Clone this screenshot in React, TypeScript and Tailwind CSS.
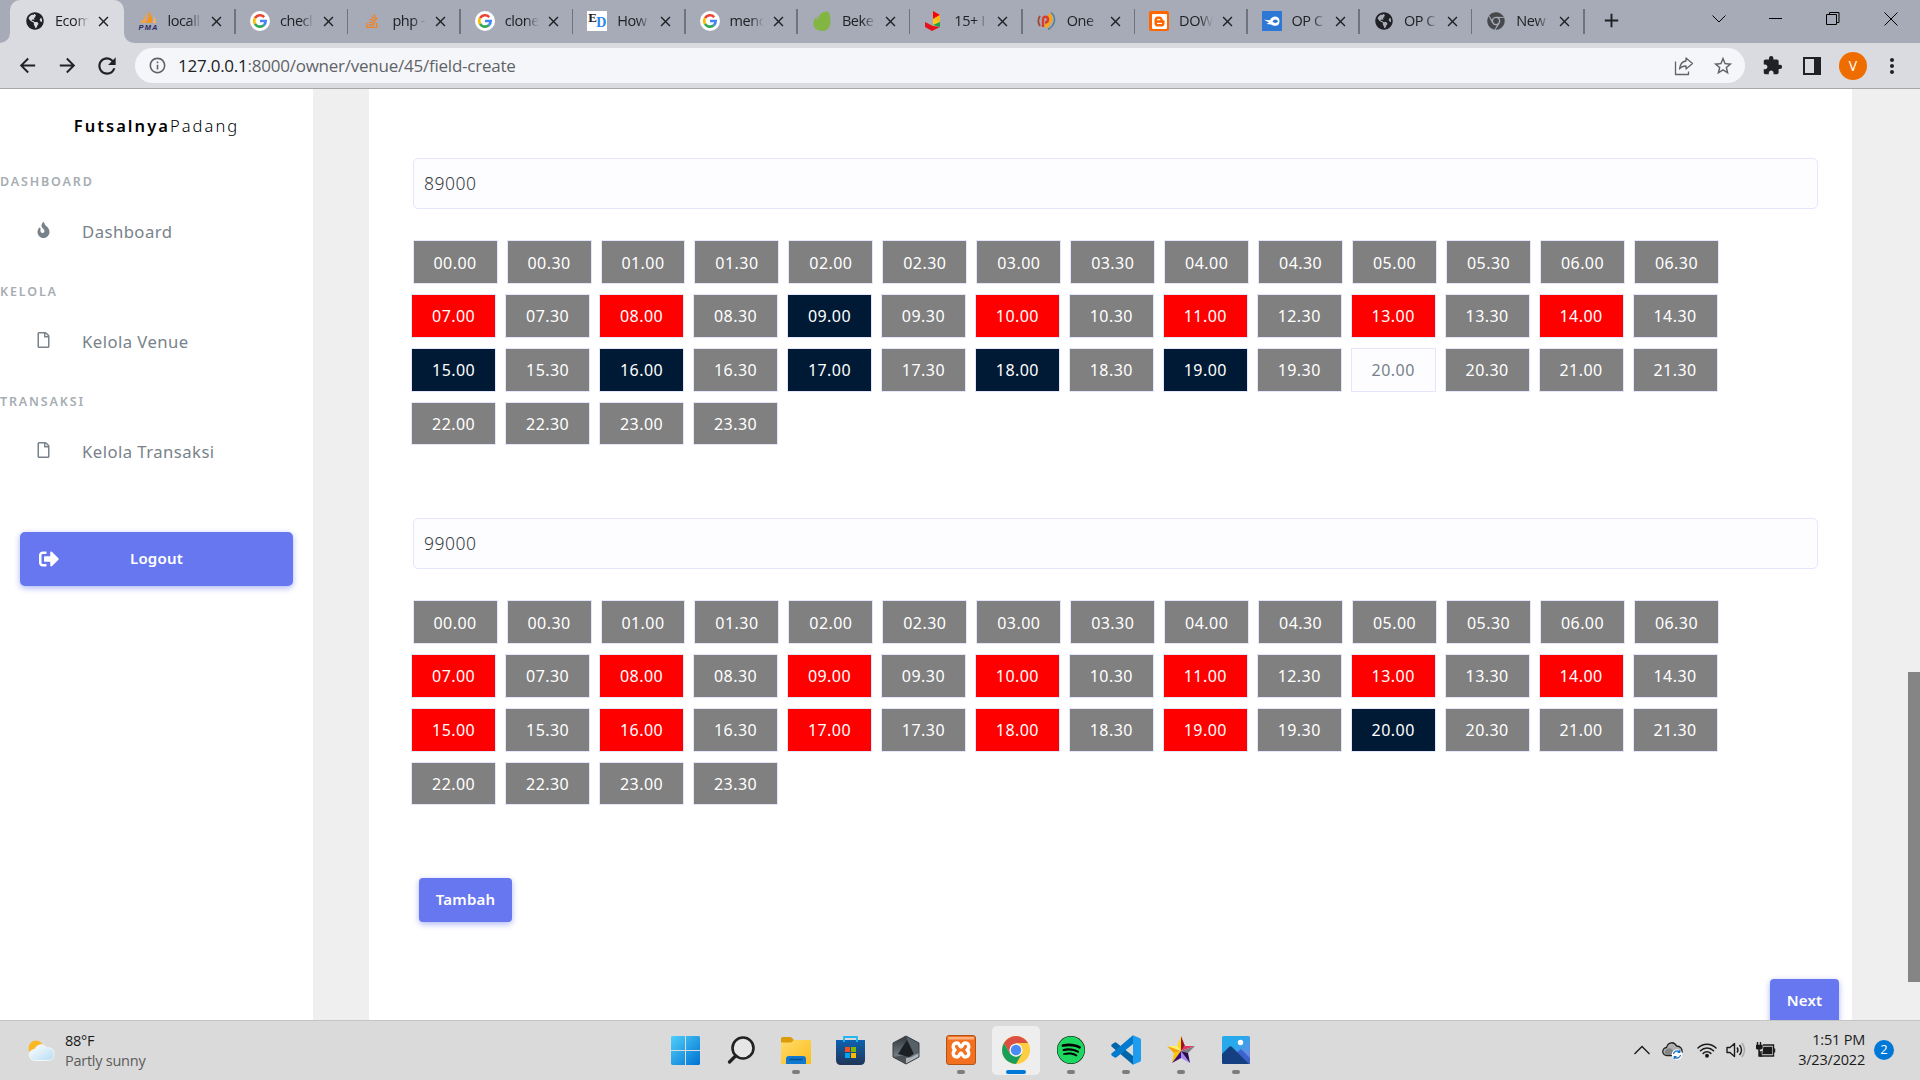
import React from "react";
import { FaGlobeAmericas, FaFire, FaRegFile, FaSignOutAlt, FaStackOverflow, FaSpotify, FaChrome } from "react-icons/fa";
import { SiBlogger } from "react-icons/si";
import { MdClose, MdExtension, MdMoreVert, MdArrowBack, MdArrowForward, MdRefresh, MdAdd, MdInfoOutline, MdStarOutline } from "react-icons/md";

const UI = "font-['Open_Sans','Noto_Sans',sans-serif]";
const BODY = "font-['Noto_Sans',sans-serif]";

function GoogleIcon() {
  return (
    <svg viewBox="0 0 20 20" className="h-5 w-5">
      <circle cx="10" cy="10" r="10" fill="#fff" />
      <g fill="none" strokeWidth="2.6">
        <path d="M14.2 6.1A5.8 5.8 0 0 0 5 7.1" stroke="#ea4335" />
        <path d="M5 7.1a5.8 5.8 0 0 0 0 5.8" stroke="#fbbc05" />
        <path d="M5 12.9a5.8 5.8 0 0 0 8.8 1.3" stroke="#34a853" />
        <path d="M13.8 14.2A5.6 5.6 0 0 0 15.7 10H10" stroke="#4285f4" />
      </g>
    </svg>
  );
}

function PmaIcon() {
  return (
    <svg viewBox="0 0 20 20" className="h-5 w-5">
      <path d="M8 1c1 4 1 8-1 11H2C5 9 8 6 8 1z" fill="#f9a13a" />
      <path d="M10 0c4 4 5 8 4 12H8c3-4 3-8 2-12z" fill="#f7941e" />
      <path d="M15 4c2 3 3 5 3 8h-3c1-3 1-5 0-8z" fill="#fbb45c" />
      <text x="0.5" y="18.8" fontSize="7.500" fontWeight="700" fontStyle="italic" fontFamily="Liberation Sans" fill="#2a2c66" textLength="19">PMA</text>
    </svg>
  );
}

function EdIcon() {
  return (
    <span className="relative block h-5 w-5 bg-white font-['Liberation_Serif',serif] font-bold">
      <span className="absolute left-[1px] top-[-1px] text-[13px] leading-[15px] text-[#222]">E</span>
      <span className="absolute left-[9px] top-[4px] text-[14px] leading-[15px] text-[#2b86ee]">D</span>
    </span>
  );
}

function LeafIcon() {
  return (
    <svg viewBox="0 0 20 20" className="h-5 w-5">
      <path d="M15.500.5C12 0 6 3 5 10c-.6-1-.5-3-.2-4.500C2 8 .5 12 2 15.500 4 19 8 20 11 20c5-.5 8-5 7.500-11C18.200 5 17.500 1 15.500.5z" fill="#82b541" />
    </svg>
  );
}

function BlocksIcon() {
  return (
    <svg viewBox="0 0 20 20" className="h-5 w-5">
      <path d="M9 0l7 4-7 4z" fill="#f00" />
      <path d="M16 4v7L9 8z" fill="#fdb813" />
      <path d="M9 8l7 3-7 4z" fill="#fcc914" />
      <path d="M16 11v5l-7-2z" fill="#17a34a" />
      <path d="M1 11l8 4 7 1-8 4-7-4z" fill="#e5121d" />
    </svg>
  );
}

function SwirlIcon() {
  return (
    <svg viewBox="0 0 20 20" className="h-5 w-5" fill="none">
      <path d="M3 5a9 9 0 0 0 0 10" stroke="#a0482f" strokeWidth="1.800" />
      <path d="M11.500 3.500c4 3 1.500 9-3.500 12.500" stroke="#f7a51c" strokeWidth="3.800" />
      <path d="M6 16V8.500c0-4 5-3.500 5 0 0 2-1.500 3-3 3" stroke="#dd3b2b" strokeWidth="2.400" />
      <path d="M14 1.500c6 5 4 13-3 17" stroke="#53808f" strokeWidth="1.500" />
    </svg>
  );
}

function OneShotIcon() {
  return (
    <svg viewBox="0 0 20 20" className="h-5 w-5">
      <rect width="20" height="20" fill="#2c78d4" />
      <path d="M2 8.800l6 .4c1-2.500 3-3.700 5.500-3.700a4.700 4.700 0 0 1 0 9.300c-2 0-3-.6-4.500-1.300l-4.500-.5 2.500-1.500z" fill="#fff" />
      <ellipse cx="13.300" cy="10.200" rx="2.400" ry="1.700" fill="#2c78d4" />
    </svg>
  );
}

const globe = <FaGlobeAmericas className="h-[18px] w-[18px] text-[#202124]" />;
const tabs: { t: string; icon: React.ReactNode }[] = [
  { t: "Ecom", icon: globe },
  { t: "locall", icon: <PmaIcon /> },
  { t: "checl", icon: <GoogleIcon /> },
  { t: "php -", icon: <FaStackOverflow className="h-4 w-4 text-[#f48024]" /> },
  { t: "clone", icon: <GoogleIcon /> },
  { t: "How", icon: <EdIcon /> },
  { t: "menc", icon: <GoogleIcon /> },
  { t: "Beke", icon: <LeafIcon /> },
  { t: "15+ I", icon: <BlocksIcon /> },
  { t: "One", icon: <SwirlIcon /> },
  { t: "DOW", icon: <span className="flex h-5 w-5 items-center justify-center rounded-[2px] bg-[#ff6600]"><SiBlogger className="h-[15px] w-[15px] text-white" /></span> },
  { t: "OP C", icon: <OneShotIcon /> },
  { t: "OP C", icon: globe },
  { t: "New", icon: <FaChrome className="h-[18px] w-[18px] text-[#46484c]" /> },
];

function TabStrip() {
  return (
    <div className="flex h-[43px] bg-[#a7abb8]">
      <div className="w-[10px] shrink-0 bg-[#dadbe0]"><div className="h-full w-full rounded-br-[10px] bg-[#a7abb8]" /></div>
      {tabs.map((tab, i) => (
        <div key={i} className={i === 0 ? "h-full w-[113.600px] shrink-0 bg-[#a7abb8]" : i === 1 ? "h-full w-[112.400px] shrink-0 bg-[#dadbe0]" : "h-full w-[112.400px] shrink-0"}>
          <div className={i === 0 ? "flex h-full items-center rounded-t-[10px] bg-[#dadbe0] pb-px pl-[15px]" : i === 1 ? "flex h-full items-center rounded-bl-[10px] bg-[#a7abb8] pb-px pl-[14px]" : "flex h-full items-center pb-px pl-[14px]"}>
            <span className="flex h-5 w-5 shrink-0 items-center justify-center">{tab.icon}</span>
            <span className="ml-[10px] w-[34px] shrink-0 whitespace-nowrap text-[14.500px] tracking-[-0.450px] text-[#202124] [mask-image:linear-gradient(to_right,black_60%,transparent)]">{tab.t}</span>
            <MdClose className="ml-[6px] h-[17px] w-[17px] shrink-0 text-[#202124]" />
            {i > 0 && <span className="ml-auto h-[25px] w-[1.500px] bg-[#70737c]" />}
          </div>
        </div>
      ))}
      <MdAdd className="ml-[15px] mt-[9px] h-[23px] w-[23px] text-[#202124]" />
      <div className="ml-auto flex items-start pr-[22px] pt-[11px] text-black">
        <svg viewBox="0 0 14 16" className="mr-[43px] h-4 w-[14px]" fill="none" stroke="currentColor"><path d="M.5 4.500l6.500 6.500 6.500-6.500" /></svg>
        <svg viewBox="0 0 14 16" className="mr-[43px] h-4 w-[14px]" fill="none" stroke="currentColor"><path d="M0 7.500h13" /></svg>
        <svg viewBox="0 0 14 16" className="mr-[44px] h-4 w-[14px]" fill="none" stroke="currentColor"><path d="M.5 3.500h10v10H.5zM3.500 3.500v-2h9.500v10h-2.500" /></svg>
        <svg viewBox="0 0 14 16" className="h-4 w-[14px]" fill="none" stroke="currentColor"><path d="M.5 1.500l13 13M13.500 1.500l-13 13" /></svg>
      </div>
    </div>
  );
}

function Toolbar() {
  return (
    <div className="flex h-[46px] items-center border-b border-[#a6a7ab] bg-[#dadbe0] pl-[16px] text-[#202124]">
      <MdArrowBack className="h-[23px] w-[23px]" />
      <MdArrowForward className="ml-[17px] h-[23px] w-[23px]" />
      <MdRefresh className="ml-[15px] h-[26px] w-[26px]" />
      <div className="ml-[15px] flex h-[35px] w-[1610px] shrink-0 items-center rounded-full bg-[#f5f6f9] pl-[13px] pr-[11px] text-[#5f6368]">
        <MdInfoOutline className="h-[19px] w-[19px]" />
        <span className="ml-[11px] whitespace-nowrap text-[17px] tracking-[-0.240px]"><span className="text-[#202124]">127.0.0.1</span>:8000/owner/venue/45/field-create</span>
        <svg viewBox="0 0 20 20" className="ml-auto h-5 w-5" fill="none" stroke="currentColor" strokeWidth="1.300"><path d="M1.500 5.500v13h13v-3M12 2l6.500 5.500-6.500 5.500v-3c-3 0-5 .8-6.500 3C6 8.500 8 5.500 12 5z" strokeLinejoin="round" /></svg>
        <MdStarOutline className="ml-[18px] h-[22px] w-[22px]" />
      </div>
      <MdExtension className="ml-[17px] h-[21px] w-[21px] shrink-0" />
      <div className="ml-[20px] h-[18px] w-[18px] shrink-0 border-[2.500px] border-r-[7px] border-[#202124]" />
      <div className="ml-[18px] flex h-7 w-7 shrink-0 items-center justify-center rounded-full bg-[#ef6c00] text-[14px] text-white">V</div>
      <MdMoreVert className="ml-[13px] h-[24px] w-[24px] shrink-0" />
    </div>
  );
}

function MenuSection({ title, label, icon }: { title: string; label: string; icon: React.ReactNode }) {
  return (
    <div className="h-[110px]">
      <div className="h-[25px] text-[12.500px] font-semibold leading-[25px] tracking-[1.850px] text-[#a6adb3]">{title}</div>
      <div className="mt-[13px] flex h-[50px] items-center text-[#78828a]">
        <span className="flex w-[82px] items-center pb-[4px] pl-[35px]">{icon}</span>
        <span className="text-[16.700px] tracking-[0.450px]">{label}</span>
      </div>
    </div>
  );
}

function Sidebar() {
  return (
    <aside className="h-full w-[313px] shrink-0 bg-white">
      <div className="flex h-[74px] items-center justify-center whitespace-nowrap text-[16.500px] tracking-[2.050px] text-black">
        <span className="font-semibold">Futsalnya</span><span className="font-light">Padang</span>
      </div>
      <nav className="pt-[6px]">
        <MenuSection title="DASHBOARD" label="Dashboard" icon={<FaFire className="h-4 w-[17px]" />} />
        <MenuSection title="KELOLA" label="Kelola Venue" icon={<FaRegFile className="h-4 w-[17px]" />} />
        <MenuSection title="TRANSAKSI" label="Kelola Transaksi" icon={<FaRegFile className="h-4 w-[17px]" />} />
      </nav>
      <button className="ml-5 mt-[33px] flex h-[54px] w-[273px] items-center rounded-[5px] bg-[#6777ef] pl-[19px] text-[15px] font-semibold text-white shadow-[0_2px_6px_#acb5f6]">
        <FaSignOutAlt className="h-5 w-5" />
        <span className="ml-[71px] pb-[2px] tracking-[0.200px]">Logout</span>
      </button>
    </aside>
  );
}

const rows = [
  ["00.00", "00.30", "01.00", "01.30", "02.00", "02.30", "03.00", "03.30", "04.00", "04.30", "05.00", "05.30", "06.00", "06.30"],
  ["07.00", "07.30", "08.00", "08.30", "09.00", "09.30", "10.00", "10.30", "11.00", "12.30", "13.00", "13.30", "14.00", "14.30"],
  ["15.00", "15.30", "16.00", "16.30", "17.00", "17.30", "18.00", "18.30", "19.00", "19.30", "20.00", "20.30", "21.00", "21.30"],
  ["22.00", "22.30", "23.00", "23.30"],
];

const rowClass = [
  "ml-[43.600px] flex h-[44px] gap-[9px] leading-[44px]",
  "ml-[42.200px] flex h-[44px] gap-[9px] leading-[42px]",
  "ml-[42.200px] flex h-[44px] gap-[9px] leading-[42px]",
  "ml-[42.200px] flex h-[43px] gap-[9px] leading-[42px]",
];

type Group = { price: string; taken: string[]; picked: string[]; open: string[] };

const groups: Group[] = [
  { price: "89000", taken: ["07.00", "08.00", "10.00", "11.00", "13.00", "14.00"], picked: ["09.00", "15.00", "16.00", "17.00", "18.00", "19.00"], open: ["20.00"] },
  { price: "99000", taken: ["07.00", "08.00", "09.00", "10.00", "11.00", "13.00", "14.00", "15.00", "16.00", "17.00", "18.00", "19.00"], picked: ["20.00"], open: [] },
];

function slotColor(g: Group, t: string) {
  if (g.taken.includes(t)) return "bg-[#ff0000] text-white";
  if (g.picked.includes(t)) return "bg-[#001a35] text-white";
  if (g.open.includes(t)) return "bg-[#fdfdff] text-[#78828a]";
  return "bg-[#808080] text-white";
}

function PriceGroup({ g }: { g: Group }) {
  return (
    <div className="h-[360px]">
      <div className="ml-[44px] flex h-[51px] w-[1405px] items-center rounded-[5px] border border-[#e4e6fc] bg-[#fdfdff] pb-px pl-[10px] text-[17.500px] font-light tracking-[0.500px] text-[#343a40]">{g.price}</div>
      <div className="mt-[31px] flex flex-col gap-[10px]">
        {rows.map((r, i) => (
          <div key={i} className={rowClass[i]}>
            {r.map((t) => (
              <div key={t} className={"h-full w-[84.960px] shrink-0 border border-[#e4e6fc] text-center text-[16px] tracking-[0.450px] " + slotColor(g, t)}>{t}</div>
            ))}
          </div>
        ))}
      </div>
    </div>
  );
}

function Content() {
  return (
    <main className="flex h-full grow bg-[#efefef] pl-[56px]">
      <section className="h-full w-[1483px] overflow-hidden bg-white pt-[69px]">
        {groups.map((g) => <PriceGroup key={g.price} g={g} />)}
        <button className="ml-[50px] block h-[44px] w-[93px] rounded-[4px] bg-[#6777ef] pb-px text-[15px] font-semibold tracking-[0.200px] text-white shadow-[0_2px_6px_#acb5f6]">Tambah</button>
        <button className="ml-auto mr-[13px] mt-[57px] block h-[44px] w-[69px] rounded-[4px] bg-[#6777ef] pb-px text-[15px] font-semibold tracking-[0.200px] text-white shadow-[0_2px_6px_#acb5f6]">Next</button>
      </section>
      <div className="ml-auto w-[12px] pt-[583px]"><div className="h-[310px] bg-[#858585]" /></div>
    </main>
  );
}

const WindowsIcon = () => (
  <svg viewBox="0 0 29 29" className="h-[29px] w-[29px]">
    <defs><linearGradient id="win" x1="0" y1="0" x2="1" y2="1"><stop offset="0" stopColor="#4fd0fb" /><stop offset="1" stopColor="#0071d3" /></linearGradient></defs>
    <path d="M1 0h13v14H0V1zM15 0h13l1 1v13H15zM0 15h14v14H1l-1-1zM15 15h14v13l-1 1H15z" fill="url(#win)" />
  </svg>
);
const SearchIcon = () => (
  <svg viewBox="0 0 28 28" className="h-7 w-7" fill="none" stroke="#222" strokeLinecap="round">
    <circle cx="16" cy="12" r="10.500" strokeWidth="2.600" fill="#e6e6e6" /><path d="M8.500 20l-6 6" strokeWidth="3.200" />
  </svg>
);
const FolderIcon = () => (
  <svg viewBox="0 0 30 27" className="h-[27px] w-[30px]">
    <defs><linearGradient id="fold" x1="0" y1="0" x2="1" y2="1"><stop offset="0" stopColor="#ffdc6b" /><stop offset="1" stopColor="#fcbc1c" /></linearGradient></defs>
    <path d="M0 1.500Q0 0 1.500 0H10l3 3v6H0z" fill="#dc9b0b" /><path d="M0 5.500h10l3-2.500h15.500Q30 3 30 4.500V27H0z" fill="url(#fold)" />
    <path d="M5 27v-5q0-3 3-3h14q3 0 3 3v5z" fill="#0f78cf" /><path d="M9 22.500h12" stroke="#064f91" strokeWidth="1.500" strokeLinecap="round" />
  </svg>
);
const StoreIcon = () => (
  <svg viewBox="0 0 29 29" className="h-[29px] w-[29px]">
    <defs><linearGradient id="store" x1="0" y1="0" x2="0" y2="1"><stop offset="0" stopColor="#0d62b0" /><stop offset="1" stopColor="#203457" /></linearGradient></defs>
    <path d="M0 4h29v20q0 5-5 5H5q-5 0-5-5z" fill="url(#store)" /><path d="M8 6V1h13v5" fill="none" stroke="#26b5f2" strokeWidth="1.800" />
    <path d="M9 11h5v5H9z" fill="#f25022" /><path d="M15 11h5v5h-5z" fill="#7fba00" /><path d="M9 17h5v5H9z" fill="#00a4ef" /><path d="M15 17h5v5h-5z" fill="#ffb900" />
  </svg>
);
const HexIcon = () => (
  <svg viewBox="0 0 28 30" className="h-[30px] w-7">
    <defs><linearGradient id="hex" x1="0" y1="0" x2="0" y2="1"><stop offset="0" stopColor="#30373d" /><stop offset="1" stopColor="#8c979e" /></linearGradient></defs>
    <path d="M14 1l13 7v14l-13 7-13-7V8z" fill="url(#hex)" />
    <path d="M14 1l13 7v12l-5-2-7-13z" fill="#566069" />
    <path d="M1 22l13-2 6 2-6 7z" fill="#4a5258" />
    <path d="M15 5l7 14-5 3-11-3z" fill="#1b2025" />
    <path d="M14 29V23l6-1 7-4v4z" fill="#aeb4b8" />
    <path d="M14 1l13 7v14l-13 7-13-7V8z" fill="none" stroke="#3a4147" strokeWidth="1" />
  </svg>
);
const XamppIcon = () => (
  <svg viewBox="0 0 30 30" className="h-[30px] w-[30px]">
    <rect x=".5" y=".5" width="29" height="29" rx="2.500" fill="#f37021" stroke="#b25316" /><path d="M2 2h26v2.500H2z" fill="#ffb07c" />
    <path d="M11 8c2.500 0 2.500 4 4 4s1.500-4 4-4c4 0 5 4.500 2 7 3 2.500 2 7-2 7-2.500 0-2.500-4-4-4s-1.500 4-4 4c-4 0-5-4.500-2-7-3-2.500-2-7 2-7z" fill="#f37021" stroke="#fff" strokeWidth="3.400" strokeLinejoin="round" />
  </svg>
);
const ChromeIcon = () => (
  <svg viewBox="0 0 28 28" className="h-7 w-7">
    <circle cx="14" cy="14" r="14" fill="#fecd42" />
    <path d="M1.900 7A14 14 0 0 1 26.100 7H14l-6.100 10.500z" fill="#dd4f43" />
    <path d="M1.900 7A14 14 0 0 0 14 28l6.100-10.500L14 21l-6.100-3.500z" fill="#189f5c" />
    <circle cx="14" cy="14" r="6.600" fill="#f3f3f3" /><circle cx="14" cy="14" r="5.200" fill="#4a8af4" />
  </svg>
);
const SpotifyIcon = () => (
  <span className="rounded-full bg-black"><FaSpotify className="h-7 w-7 text-[#1ed760]" /></span>
);
const CodeIcon = () => (
  <svg viewBox="0 0 30 30" className="h-[30px] w-[30px]">
    <path d="M22 29.700v-8.700L5.500 7.700q-1.200-.9-2.300 0L.8 9.500q-1.200 1.100 0 2.200z" fill="#0065a9" />
    <path d="M22 .3V9L5.500 22.300q-1.200.9-2.300 0L.8 20.500q-1.200-1.100 0-2.200z" fill="#007acc" />
    <path d="M22 .3l7 3q1 .5 1 1.700v20q0 1.200-1 1.700l-7 3z" fill="#1f9cf0" />
  </svg>
);
const StarIcon = () => (
  <svg viewBox="0 0 28 28" className="h-7 w-7">
    <path d="M14 0l-4 10 4 5z" fill="#fddb1f" /><path d="M14 0l4 10-4 5z" fill="#9a1327" /><path d="M0 10h10l4 5z" fill="#fff16b" /><path d="M0 10l7 7 7-2z" fill="#f7a400" /><path d="M28 10H18l-4 5z" fill="#e8336a" /><path d="M28 10l-7 7-7-2z" fill="#7e7e80" /><path d="M5 27l2-10 7-2z" fill="#ffc400" /><path d="M5 27l9-5v-7z" fill="#3b0c73" /><path d="M23 27l-9-5v-7z" fill="#a685ed" /><path d="M23 27l-2-10-7-2z" fill="#290a4d" />
  </svg>
);
const PhotosIcon = () => (
  <svg viewBox="0 0 28 28" className="h-7 w-7">
    <defs><linearGradient id="pho" x1="0" y1="0" x2="1" y2="1"><stop offset=".4" stopColor="#27a9ec" /><stop offset="1" stopColor="#8a7be0" /></linearGradient></defs>
    <rect width="28" height="28" rx="1.500" fill="url(#pho)" /><path d="M14 17l5-4 9 9v6H14z" fill="#3e62cc" /><path d="M0 18l7-7q1.500-1.500 3 0l17 17H1.500Q0 28 0 26.500z" fill="#143f80" /><circle cx="18.500" cy="6.500" r="2.700" fill="#fff" />
  </svg>
);

const apps: { icon: React.ReactNode; run?: boolean; active?: boolean }[] = [
  { icon: <WindowsIcon /> },
  { icon: <SearchIcon /> },
  { icon: <FolderIcon />, run: true },
  { icon: <StoreIcon /> },
  { icon: <HexIcon /> },
  { icon: <XamppIcon />, run: true },
  { icon: <ChromeIcon />, active: true },
  { icon: <SpotifyIcon />, run: true },
  { icon: <CodeIcon />, run: true },
  { icon: <StarIcon />, run: true },
  { icon: <PhotosIcon />, run: true },
];

function Tray() {
  return (
    <div className="flex h-full items-center pb-px text-[#1b1b1b]">
      <svg viewBox="0 0 16 10" className="h-[10px] w-4" fill="none" stroke="currentColor" strokeWidth="1.400"><path d="M.5 9L8 1.500 15.500 9" /></svg>
      <svg viewBox="0 0 21 19" className="ml-[12px] h-[19px] w-[21px]">
        <path d="M5 14.500a4 4 0 0 1-.5-8C6 1 12 0 14.500 5c4 0 6 3 5.500 6l-2 3.500z" fill="#b0b0b0" stroke="#222" strokeWidth="1.300" /><path d="M5 8c3-2 5 0 7 3l-3 3H5c-3-1-3-4 0-6z" fill="#858585" />
        <circle cx="15" cy="13.500" r="5.300" fill="#fff" /><path d="M11.500 13a3.500 3.500 0 0 1 6-2M18.500 14a3.500 3.500 0 0 1-6 2M17.800 9v2.300h-2.300M12.200 18v-2.300h2.300" fill="none" stroke="#1473c8" strokeWidth="1.200" />
      </svg>
      <svg viewBox="0 0 20 16" className="ml-[14px] h-4 w-5" fill="none" stroke="currentColor" strokeWidth="1.500" strokeLinecap="round"><path d="M1 6a12.500 12.500 0 0 1 18 0M3.500 8.800a9 9 0 0 1 13 0M6.200 11.400a5.400 5.400 0 0 1 7.600 0" /><circle cx="10" cy="13.800" r="1.200" fill="currentColor" /></svg>
      <svg viewBox="0 0 20 16" className="ml-[9px] h-4 w-5" fill="none" stroke="currentColor" strokeWidth="1.400"><path d="M1 5.500h3L8.500 1.500v13l-4.500-4H1z" strokeLinejoin="round" /><path d="M11 5.500q2 2.500 0 5M13.500 3q4 5 0 10" /><path d="M16 1q5 7 0 14" stroke="#a8a8a8" /></svg>
      <svg viewBox="0 0 20 16" className="ml-[10px] h-4 w-5" fill="none" stroke="currentColor" strokeWidth="1.400"><path d="M7 3h10.500v11H5V9M18.500 6.500v4" /><path d="M8 5.500h7.500v6H7z" fill="currentColor" /><path d="M1.500 0v3M4.500 0v3M0 3.500h6v2Q6 7 3 7 0 7 0 5.500zM3 7v7h3" fill="currentColor" /></svg>
      <div className="ml-[9px] w-[80px] whitespace-nowrap text-right text-[14.500px] leading-5 tracking-[-0.200px]">1:51 PM<br />3/23/2022</div>
      <div className="ml-[9px] flex h-5 w-5 items-center justify-center rounded-full bg-[#0078d7] text-[13px] text-white">2</div>
    </div>
  );
}

function Taskbar() {
  return (
    <footer className={"grid h-[60px] shrink-0 grid-cols-[658px_1fr_298px] border-t border-[#c5c5c5] bg-[#dadada] " + UI}>
      <div className="flex items-center pl-[28px]">
        <svg viewBox="0 0 28 22" className="h-[22px] w-7">
          <defs><linearGradient id="cl" x1="0" y1="0" x2="1" y2="1"><stop offset="0" stopColor="#fff" /><stop offset="1" stopColor="#b5dcf2" /></linearGradient></defs>
          <circle cx="8" cy="8" r="7.500" fill="#fbb724" /><path d="M7 20.500a5.500 5.500 0 0 1-.5-11C9 4 16 3 18.500 8c5-1 8 2 7.500 6.500-.3 4-3 6-6 6z" fill="url(#cl)" stroke="#f2f7fa" />
        </svg>
        <div className="ml-[9px] whitespace-nowrap text-[14.500px] leading-5 tracking-[-0.250px] text-[#1b1b1b]">88°F<br /><span className="text-[#5c5c5c]">Partly sunny</span></div>
      </div>
      <div className="flex items-start pt-[5px]">
        {apps.map((a, i) => (
          <div key={i} className="flex h-[49px] w-[55.050px] shrink-0 flex-col items-center">
            <div className={a.active ? "flex h-[49px] w-12 flex-col items-center rounded-[5px] bg-[#eeeeee]" : "flex h-[49px] w-12 flex-col items-center"}>
              <div className="flex h-[44px] items-center pt-[4px]">{a.icon}</div>
              {a.active && <div className="h-1 w-5 rounded-full bg-[#0078d7]" />}
              {a.run && <div className="h-1 w-2 rounded-full bg-[#7d7d7d]" />}
            </div>
          </div>
        ))}
      </div>
      <div className="flex items-center justify-start pl-[12px]"><Tray /></div>
    </footer>
  );
}

export default function App() {
  return (
    <div className={"flex h-[1080px] w-[1920px] flex-col overflow-hidden " + BODY}>
      <header className={"shrink-0 " + UI}>
        <TabStrip />
        <Toolbar />
      </header>
      <div className="flex h-[931px] shrink-0 overflow-hidden">
        <Sidebar />
        <Content />
      </div>
      <Taskbar />
    </div>
  );
}
